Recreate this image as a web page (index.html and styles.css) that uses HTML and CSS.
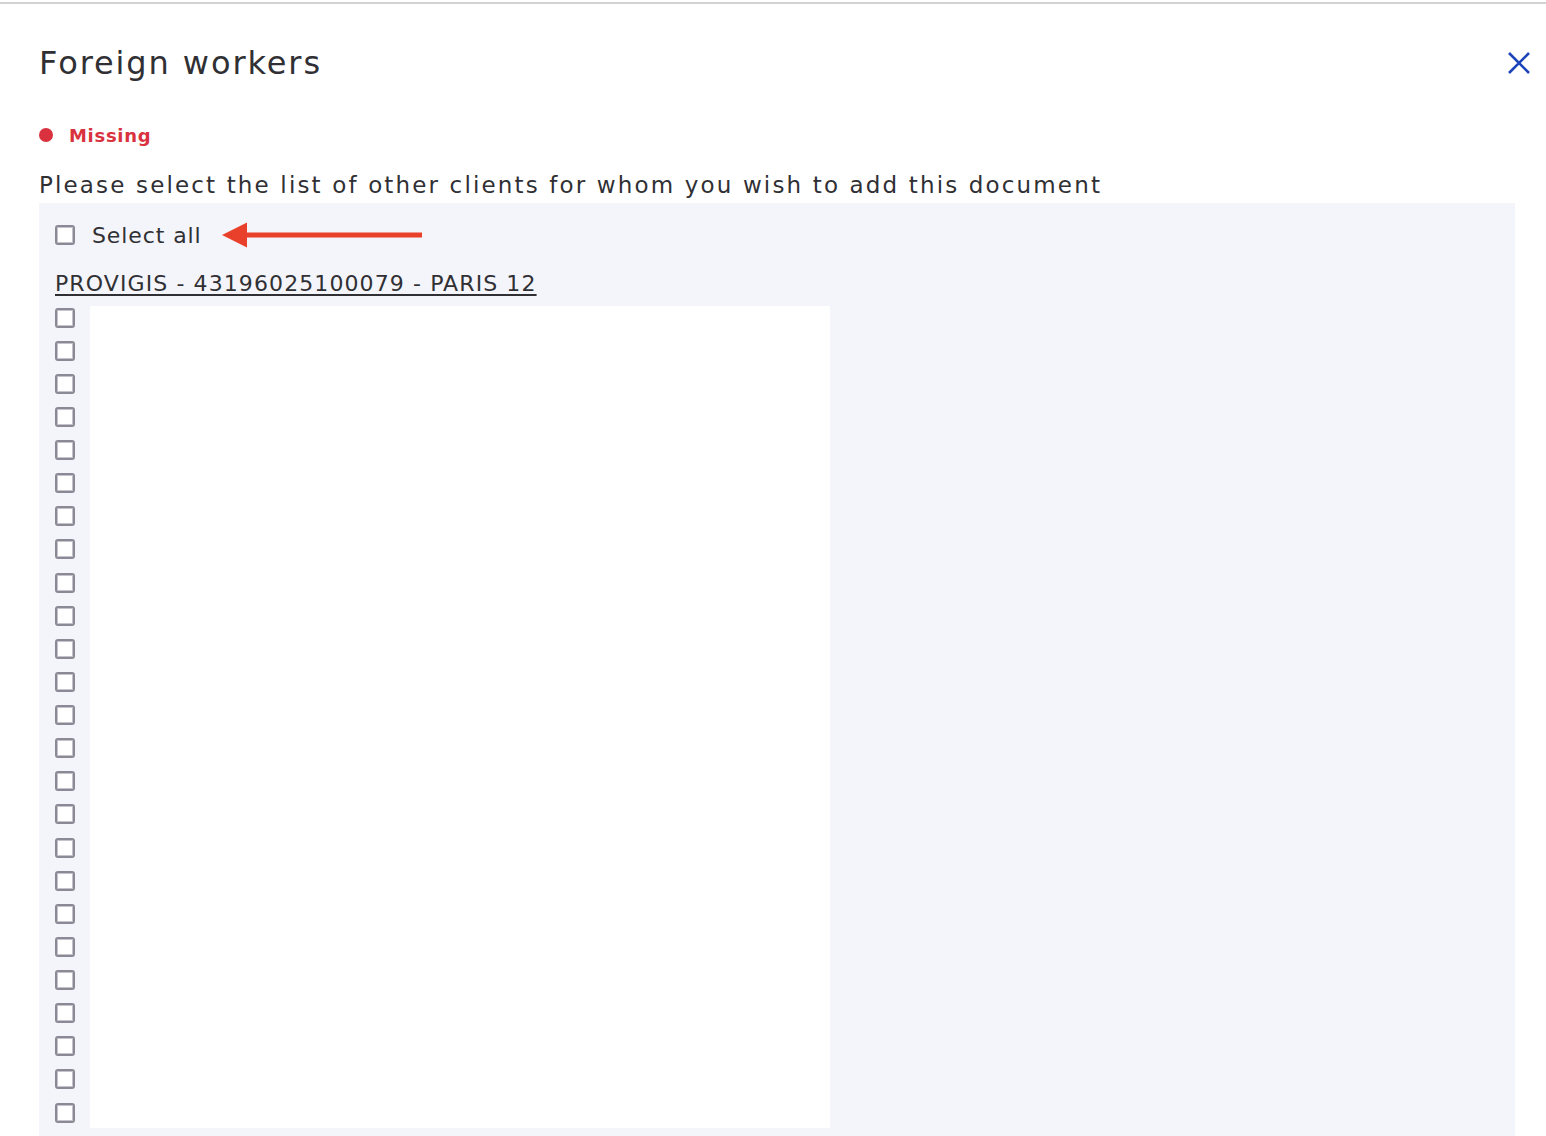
FILE: index.html
```html
<!DOCTYPE html>
<html>

<head>
    <meta charset="UTF-8">
    <title>Foreign workers</title>
    <link rel="stylesheet" href="styles.css">
</head>

<body>
    <div class="modal">
        <div class="head">
            <h1 class="title">Foreign workers</h1>
            <span class="close">
                <svg width="24" height="24" viewBox="0 0 24 24">
                    <path d="M2 2 L22 22 M22 2 L2 22" stroke="#1d45b9" stroke-width="2.6" fill="none" />
                </svg>
            </span>
        </div>

        <div class="status">
            <span class="dot"></span>
            <span class="status-text">Missing</span>
        </div>

        <p class="intro">Please select the list of other clients for whom you wish to add this document</p>

        <div class="panel">
            <div class="all">
                <span class="box"></span>
                <span class="all-text">Select all</span>
                <svg class="arrow" width="202" height="26" viewBox="0 0 202 26">
                    <path d="M25 10.5 H200 V15.5 H25 Z" fill="#e8402a" />
                    <path d="M0 13 L25 0.5 V25.5 Z" fill="#e8402a" />
                </svg>
            </div>

            <a class="client">PROVIGIS - 43196025100079 - PARIS 12</a>

            <div class="list">
                <div class="boxes" id="boxes"></div>
                <div class="sheet"></div>
            </div>
        </div>
    </div>
    <script>
    // 25 empty rows
    var boxes = document.getElementById("boxes");
    for (var i = 0; i < 25; i++) {
        var row = document.createElement("div");
        row.className = "row";
        row.innerHTML = '<span class="box"></span>';
        boxes.appendChild(row);
    }
    </script>
</body>

</html>
```

FILE: styles.css
```css
* {
    margin: 0;
    padding: 0;
    box-sizing: border-box;
}

body {
    font-family: "DejaVu Sans", "Open Sans", sans-serif;
    color: #303034;
    background: #fff;
    overflow: hidden;
}

.modal {
    margin-top: 2px;
    border-top: 2px solid #d2d2d4;
    padding: 0 31px 0 39px;
}

.head {
    display: flex;
    justify-content: space-between;
    align-items: center;
    padding-top: 39px;
}

.title {
    font-size: 32px;
    font-weight: normal;
    letter-spacing: 1.9px;
    line-height: 40px;
}

.close {
    display: block;
    width: 24px;
    height: 24px;
    margin-right: -16px;
}

.status {
    display: flex;
    align-items: center;
    margin-top: 40px;
    height: 24px;
}

.dot {
    width: 14px;
    height: 14px;
    border-radius: 50%;
    background: #d9323e;
}

.status-text {
    margin-left: 16px;
    font-size: 18px;
    font-weight: bold;
    letter-spacing: 0.7px;
    color: #d9323e;
}

.intro {
    margin-top: 22px;
    font-size: 23px;
    line-height: 32px;
    letter-spacing: 2.15px;
}

.panel {
    margin-top: 2px;
    background: #f4f5fa;
    padding: 22px 16px 20px 16px;
    height: 960px;
}

.box {
    display: block;
    width: 20px;
    height: 20px;
    border: 2px solid #8a8995;
    border-radius: 3px;
    background: #fff;
    box-shadow: inset 0 0 0 1px #c4c3cb;
}

.all {
    display: flex;
    align-items: center;
    height: 20px;
}

.all-text {
    margin-left: 17px;
    font-size: 22px;
    letter-spacing: 0.9px;
}

.arrow {
    display: block;
    margin-left: 20px;
}

.client {
    display: inline-block;
    margin-top: 26px;
    font-size: 22px;
    letter-spacing: 1.1px;
    text-decoration: underline;
    text-underline-offset: 3px;
    line-height: 26px;
}

.list {
    display: flex;
    margin-top: 9px;
}

.boxes {
    width: 35px;
    padding-top: 1.5px;
}

.row {
    height: 33.125px;
}

.sheet {
    width: 740px;
    height: 822px;
    background: #fff;
}
```
